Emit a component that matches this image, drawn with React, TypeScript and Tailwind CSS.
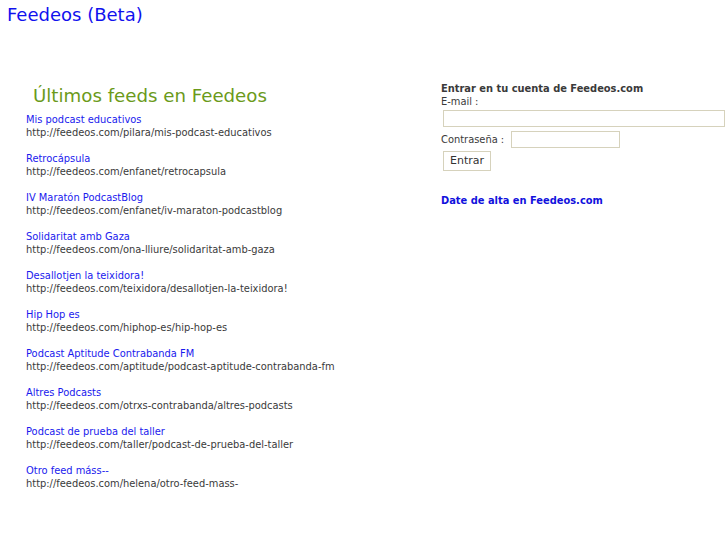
const feeds = [
  { title: "Mis podcast educativos", url: "http://feedeos.com/pilara/mis-podcast-educativos" },
  { title: "Retrocápsula", url: "http://feedeos.com/enfanet/retrocapsula" },
  { title: "IV Maratón PodcastBlog", url: "http://feedeos.com/enfanet/iv-maraton-podcastblog" },
  { title: "Solidaritat amb Gaza", url: "http://feedeos.com/ona-lliure/solidaritat-amb-gaza" },
  { title: "Desallotjen la teixidora!", url: "http://feedeos.com/teixidora/desallotjen-la-teixidora!" },
  { title: "Hip Hop es", url: "http://feedeos.com/hiphop-es/hip-hop-es" },
  { title: "Podcast Aptitude Contrabanda FM", url: "http://feedeos.com/aptitude/podcast-aptitude-contrabanda-fm" },
  { title: "Altres Podcasts", url: "http://feedeos.com/otrxs-contrabanda/altres-podcasts" },
  { title: "Podcast de prueba del taller", url: "http://feedeos.com/taller/podcast-de-prueba-del-taller" },
  { title: "Otro feed máss--", url: "http://feedeos.com/helena/otro-feed-mass-" },
];

export default function App() {
  return (
    <div className="min-h-[545px] bg-white font-['DejaVu_Sans',sans-serif] text-[9.9px] leading-[13px] text-[#3a3a3a]">
      <h1 className="px-[7px] pt-[4px] text-[18px] leading-[22px] text-[#1111ee]">Feedeos (Beta)</h1>

      <div className="mt-[56px] flex">
        <div className="w-[415px] pl-[26px]">
          <h2 className="mt-[3px] pl-[7px] text-[18.2px] leading-[22px] text-[#6b9a1a]">Últimos feeds en Feedeos</h2>
          <ul className="mt-[6px] flex flex-col gap-[13px]">
            {feeds.map((f) => (
              <li key={f.url}>
                <a href="#" className="block text-[#1a1aee]">{f.title}</a>
                <div>{f.url}</div>
              </li>
            ))}
          </ul>
        </div>

        <div className="flex-1 pl-[26px]">
          <h3 className="font-bold">Entrar en tu cuenta de Feedeos.com</h3>
          <div>E-mail :</div>
          <input className="mt-[2px] ml-[2px] block h-[17px] w-[282px] border border-[#d6d2bc] bg-white outline-none" />
          <div className="mt-[4px] flex items-center">
            <span>Contraseña :</span>
            <input type="password" className="ml-[7px] h-[17px] w-[109px] border border-[#d6d2bc] bg-white outline-none" />
          </div>
          <button className="mt-[3px] ml-[2px] h-[20px] border border-[#d6d2bc] bg-white px-[6px] text-[11px] leading-[18px] text-[#333]">
            Entrar
          </button>
          <a href="#" className="mt-[23px] block font-bold text-[#1111dd]">Date de alta en Feedeos.com</a>
        </div>
      </div>
    </div>
  );
}
